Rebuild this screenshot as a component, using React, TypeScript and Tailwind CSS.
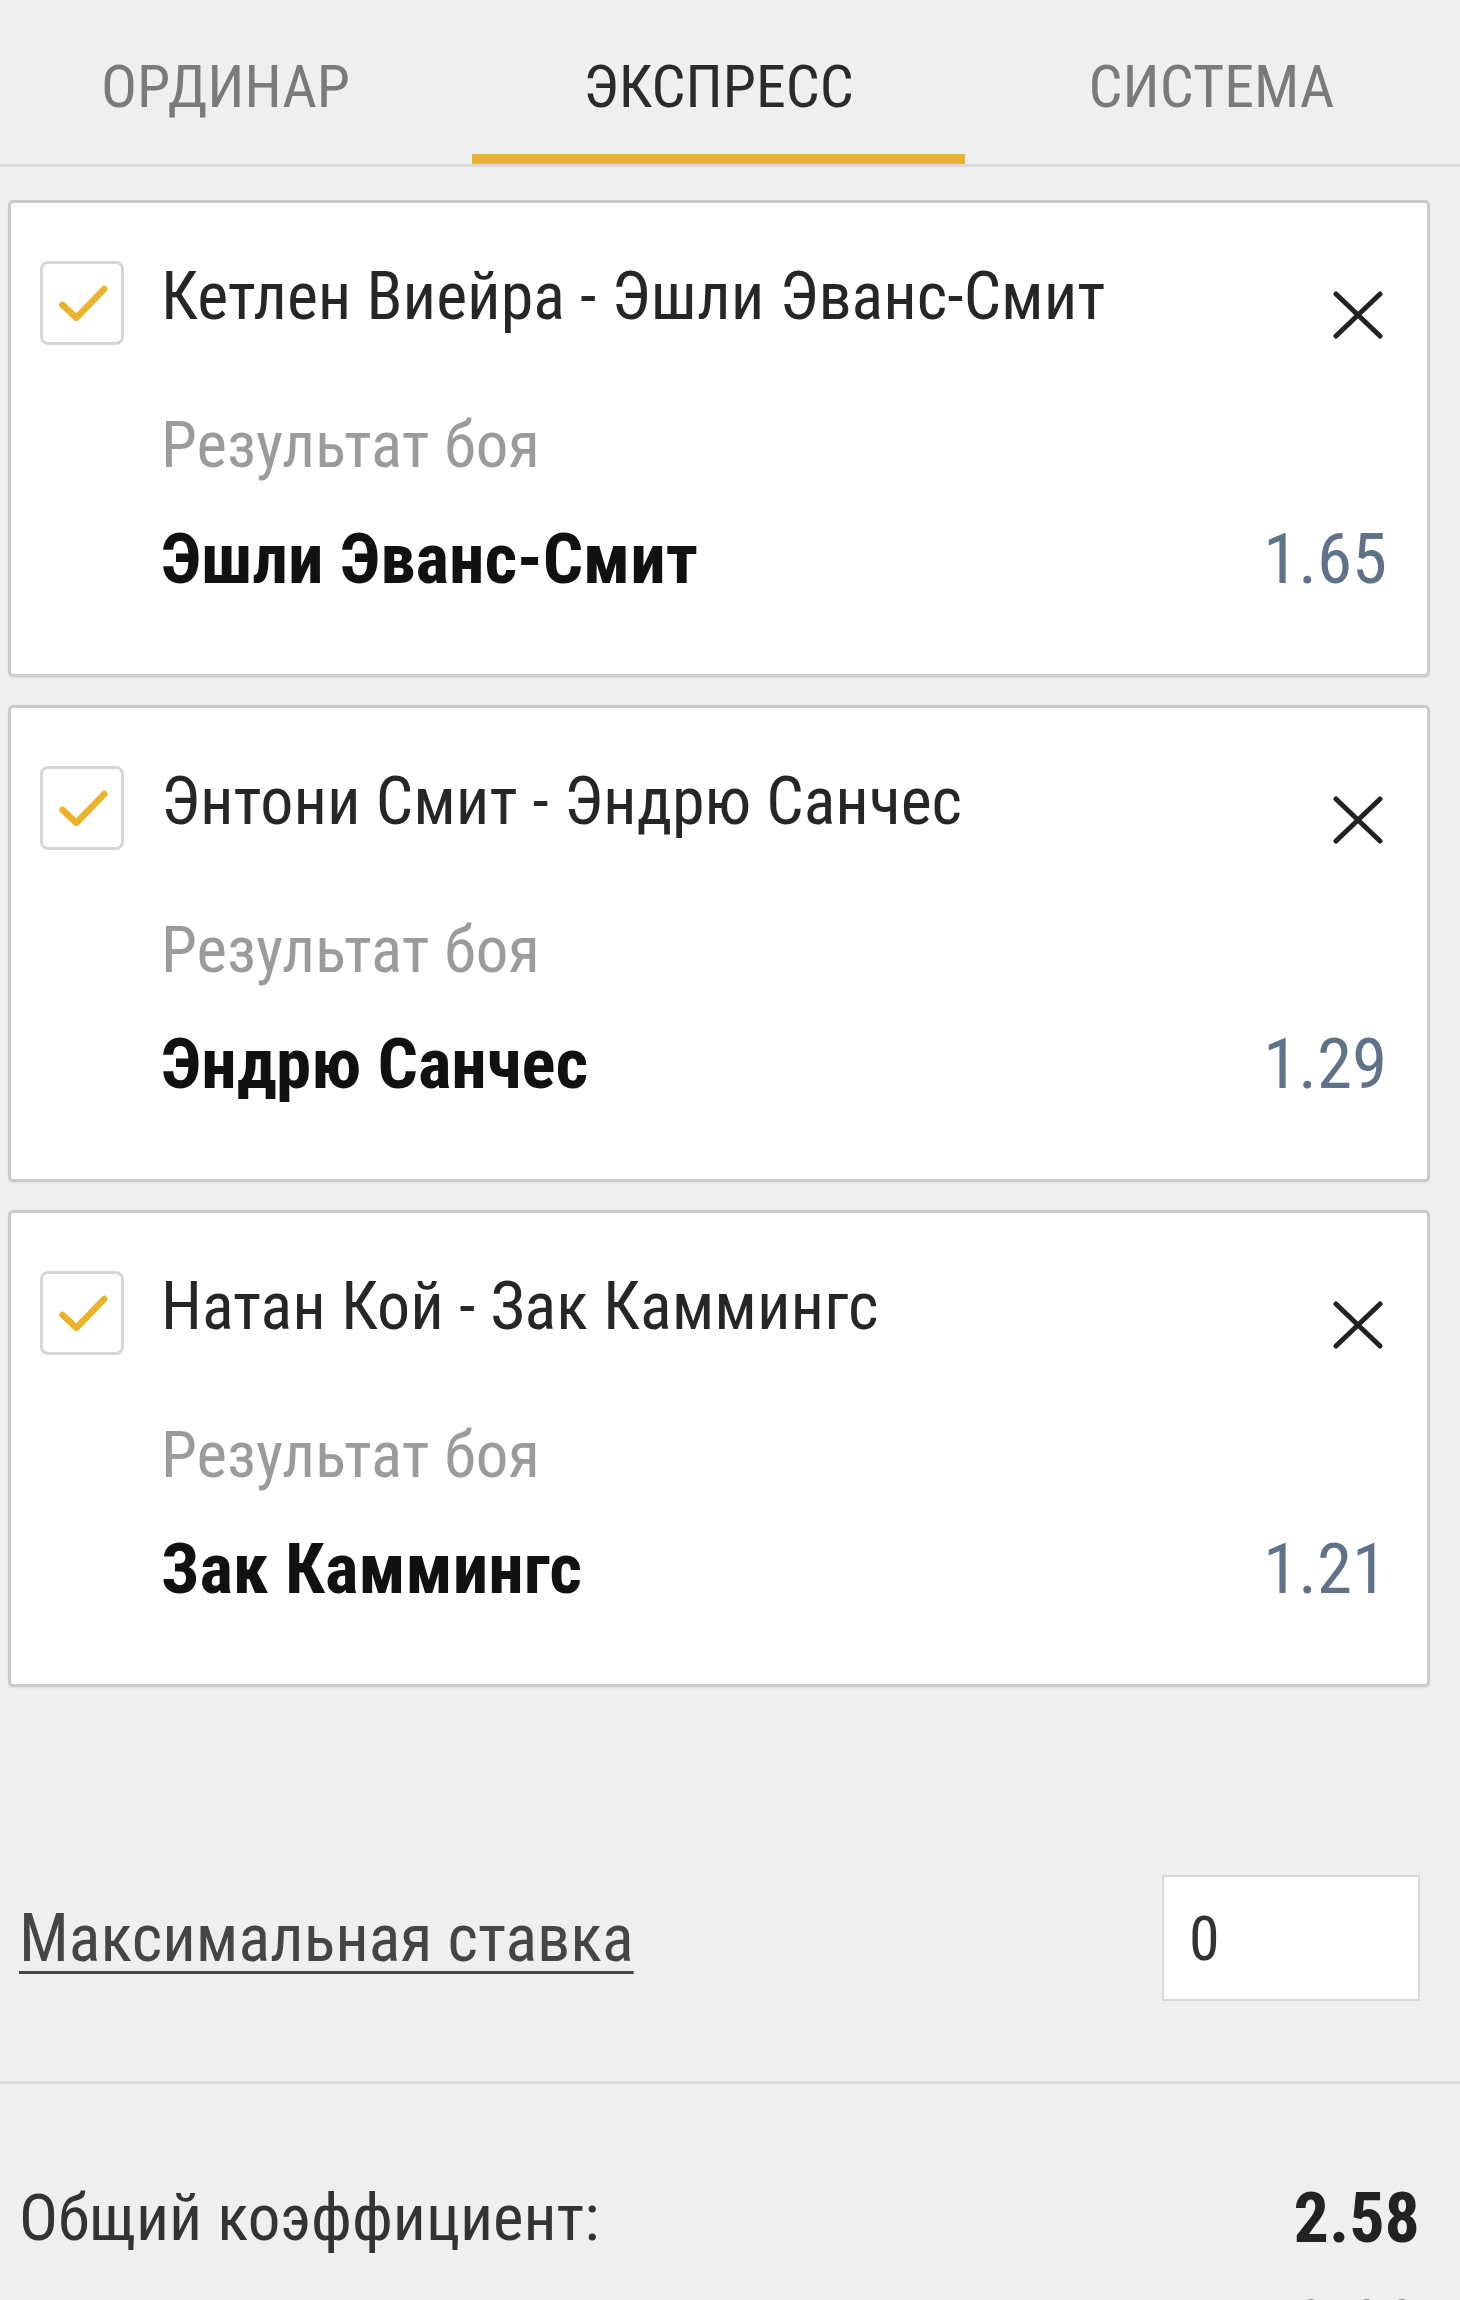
import { useState } from "react";

interface Bet {
  event: string;
  market: string;
  pick: string;
  odds: string;
}

const bets: Bet[] = [
  { event: "Кетлен Виейра - Эшли Эванс-Смит", market: "Результат боя", pick: "Эшли Эванс-Смит", odds: "1.65" },
  { event: "Энтони Смит - Эндрю Санчес", market: "Результат боя", pick: "Эндрю Санчес", odds: "1.29" },
  { event: "Натан Кой - Зак Каммингс", market: "Результат боя", pick: "Зак Каммингс", odds: "1.21" },
];

const tabs = ["ОРДИНАР", "ЭКСПРЕСС", "СИСТЕМА"];

function CheckBox() {
  return (
    <div className="flex h-[84px] w-[84px] shrink-0 items-center justify-center rounded-[8px] border-[3px] border-[#d6d6d6] bg-white">
      <svg viewBox="0 0 84 84" className="h-[84px] w-[84px]">
        <path d="M21 44 L36 58 L66 27" fill="none" stroke="#e9b32b" strokeWidth="7" strokeLinecap="round" strokeLinejoin="round" />
      </svg>
    </div>
  );
}

function CloseIcon() {
  return (
    <svg viewBox="0 0 52 48" className="mt-[30px] h-[48px] w-[52px] shrink-0">
      <path d="M4 3 L48 45 M48 3 L4 45" stroke="#222" strokeWidth="5" strokeLinecap="round" />
    </svg>
  );
}

function BetCard({ bet }: { bet: Bet }) {
  return (
    <div className="h-[477px] rounded-[5px] border-[3px] border-[#cbcbcb] bg-white pl-[29px] pr-[40px] shadow-[0_1px_2px_rgba(0,0,0,0.08)]">
      <div className="flex items-start pt-[58px]">
        <CheckBox />
        <div className="ml-[37px] -mt-[4px] flex-1 text-[66px] leading-[80px] text-[#262626]">{bet.event}</div>
        <div className="pr-[3px]">
          <CloseIcon />
        </div>
      </div>
      <div className="mt-[60px] pl-[121px] text-[65px] leading-[80px] text-[#9b9b9b]">{bet.market}</div>
      <div className="mt-[34px] flex items-center justify-between pl-[121px]">
        <span className="text-[71px] font-bold leading-[80px] text-[#111]">{bet.pick}</span>
        <span className="text-[71px] leading-[80px] text-[#5f7288]">{bet.odds}</span>
      </div>
    </div>
  );
}

export default function App() {
  const [active, setActive] = useState(1);
  const [stake, setStake] = useState("0");

  return (
    <div className="min-h-[2300px] w-[1460px] overflow-hidden bg-[#efefef] font-['Roboto_Condensed',Roboto,sans-serif]">
      <div className="-ml-[21px] flex h-[164px] w-[1479px]">
        {tabs.map((t, i) => (
          <button
            key={t}
            onClick={() => setActive(i)}
            className={
              i === active
                ? "flex flex-1 items-center justify-center border-b-[10px] border-[#e9b32b] pt-[20px] text-[60px] text-[#2b2b2b]"
                : "flex flex-1 items-center justify-center border-b-[10px] border-transparent pt-[20px] text-[60px] text-[#7a7a7a]"
            }
          >
            {t}
          </button>
        ))}
      </div>
      <div className="h-[3px] bg-[#dadada]" />

      <div className="flex flex-col gap-[28px] pl-[8px] pr-[30px] pt-[33px]">
        {bets.map((b) => (
          <BetCard key={b.event} bet={b} />
        ))}
      </div>

      <div className="mt-[188px] flex items-center justify-between pl-[19px] pr-[40px]">
        <a href="#" className="text-[66px] text-[#454545] underline decoration-[3px] underline-offset-[10px]">
          Максимальная ставка
        </a>
        <input
          value={stake}
          onChange={(e) => setStake(e.target.value)}
          className="h-[126px] w-[258px] border-2 border-[#d9d9d9] bg-white pl-[25px] text-[62px] text-[#333] outline-none"
        />
      </div>

      <div className="mt-[80px] h-[3px] bg-[#d8d8d8]" />

      <div className="mt-[94px] flex items-center justify-between pl-[19px] pr-[40px] leading-[80px]">
        <span className="text-[65px] text-[#333]">Общий коэффициент:</span>
        <span className="text-[70px] font-bold text-[#222]">2.58</span>
      </div>
      <div className="mt-[28px] flex items-center justify-between pl-[19px] pr-[40px] leading-[80px]">
        <span className="text-[65px] text-[#333]">Возможный выигрыш:</span>
        <span className="text-[70px] font-bold text-[#222]">0.00</span>
      </div>
    </div>
  );
}
